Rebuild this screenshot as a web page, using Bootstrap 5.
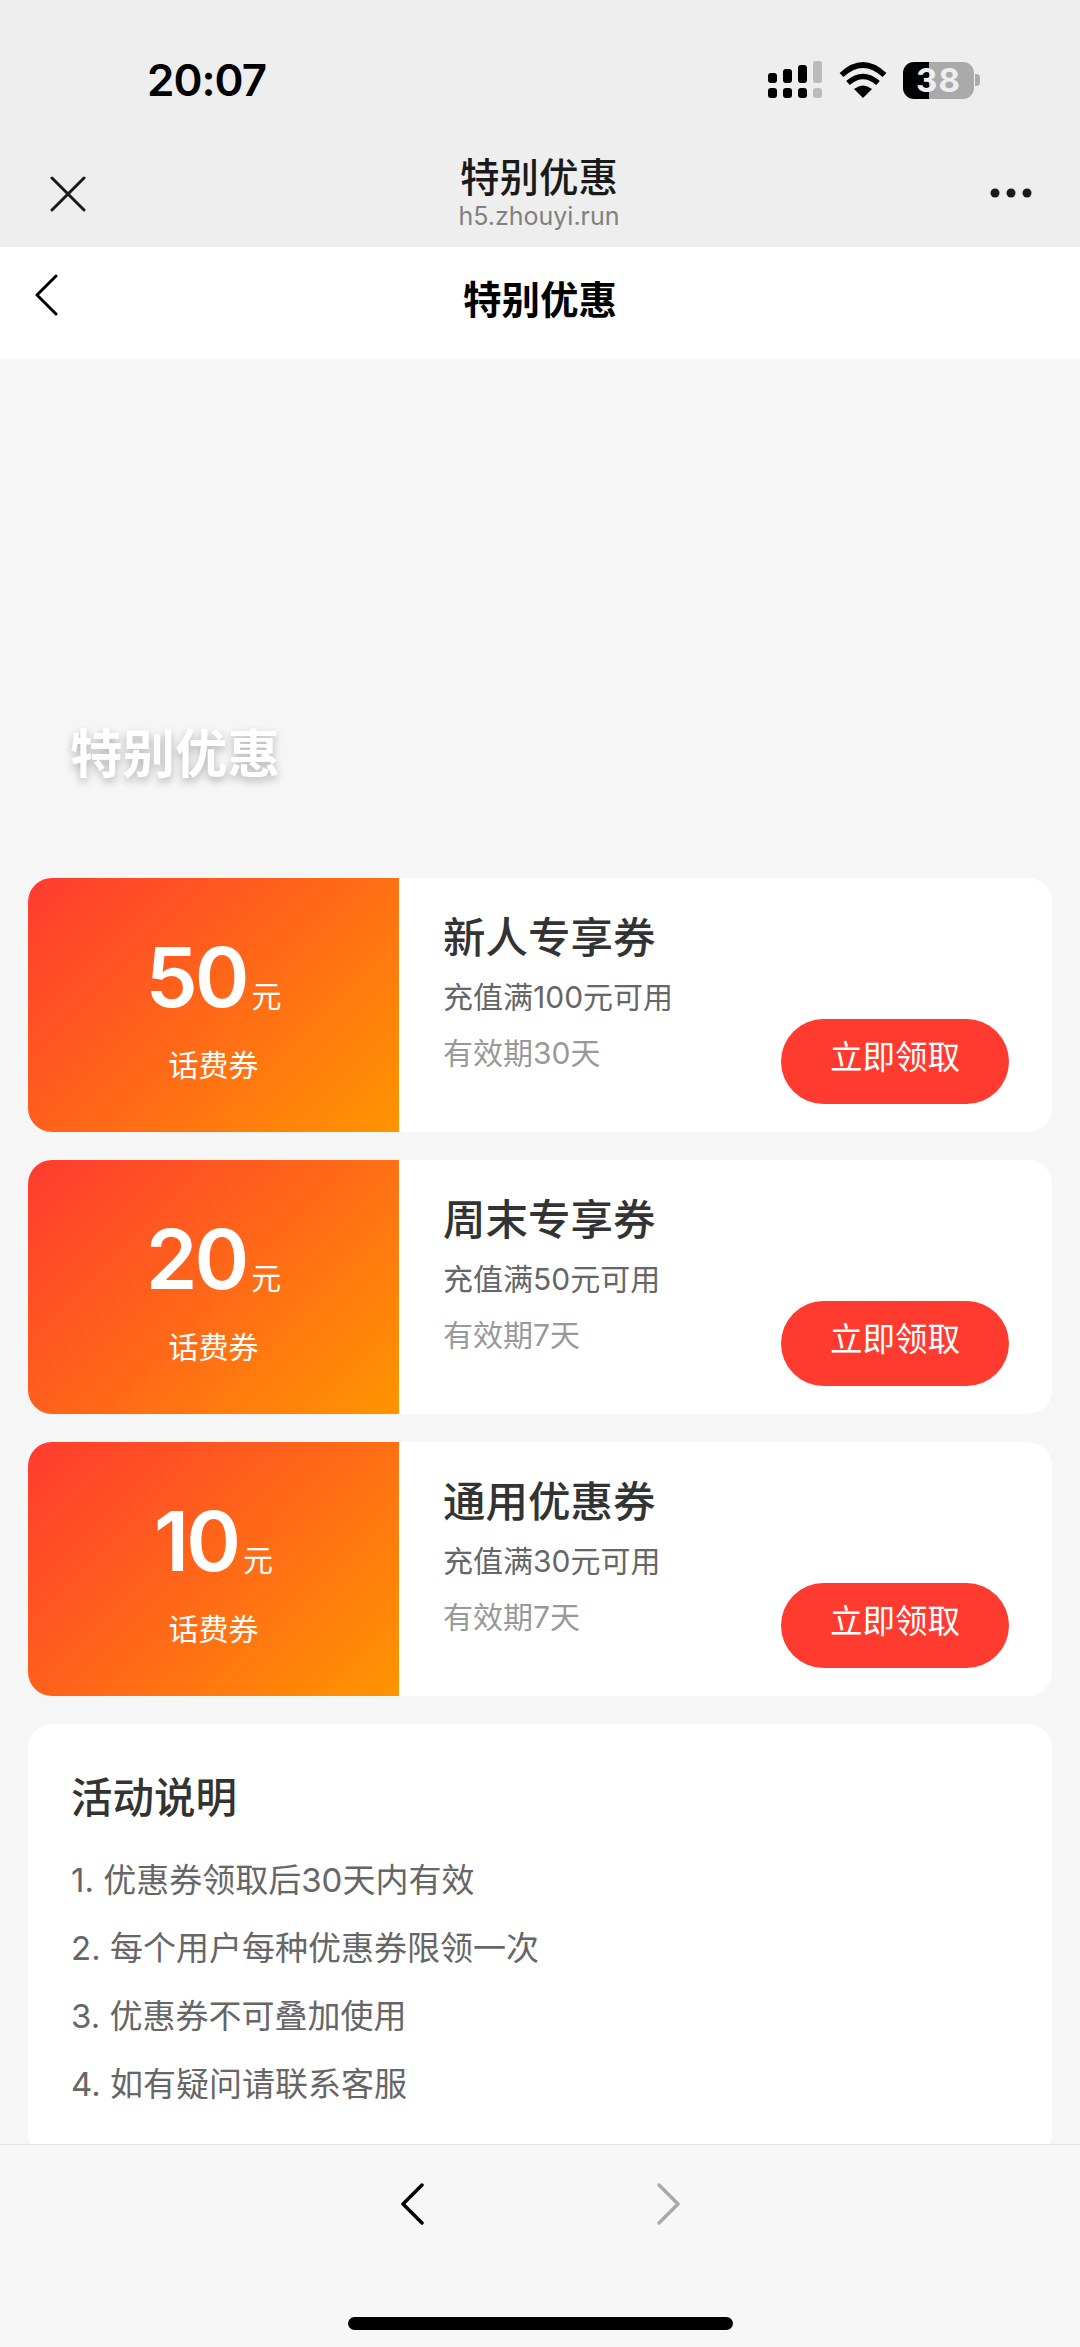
<!DOCTYPE html>
<html lang="zh-CN">
<head>
  <meta charset="UTF-8" />
  <meta name="viewport" content="width=device-width, initial-scale=1.0" />
  <title>特别优惠</title>
  <link rel="stylesheet" href="https://cdn.jsdelivr.net/npm/bootstrap@5.3.0/dist/css/bootstrap.min.css" />
  <style>
    html, body {
      height: 2347px;
      overflow: hidden;
    }
    body {
      font-family: Inter, "Noto Sans CJK SC", sans-serif;
      background: #f6f6f6;
    }
    .app-shell {
      width: 1080px;
      height: 2347px;
    }
    .status-row {
      height: 160px;
      background: #eeeeee;
      padding: 0 100px 0 147px;
    }
    .clock {
      font-size: 44px;
      font-weight: 600;
      color: #000;
      letter-spacing: -1px;
      line-height: 1;
    }
    .battery-cell {
      width: 71px;
      height: 37px;
      border-radius: 11px;
      background: linear-gradient(90deg, #000 37%, #aaa 37%);
      color: #eee;
      font-size: 33px;
      font-weight: 700;
      letter-spacing: 1px;
      line-height: 1;
    }
    .battery-cap {
      width: 5px;
      height: 12px;
      background: #aaa;
      border-radius: 0 4px 4px 0;
      margin-left: 1px;
    }
    .wx-bar {
      height: 87px;
      background: #eeeeee;
      padding: 0 48px 0 50px;
    }
    .wx-side {
      width: 120px;
      height: 66px;
    }
    .wx-side-end {
      width: 124px;
    }
    .wx-heading {
      margin-top: -6px;
    }
    .wx-title {
      font-size: 39.5px;
      font-weight: 500;
      color: #1a1a1a;
      line-height: 48px;
    }
    .wx-domain {
      font-size: 25px;
      color: #808080;
      line-height: 28px;
    }
    .dots-icon {
      margin-top: 28px;
    }
    .page-bar {
      height: 112px;
      background: #fff;
      padding: 0 34px;
    }
    .bar-slot {
      width: 120px;
    }
    .page-title {
      font-size: 38.5px;
      font-weight: 700;
      color: #000;
      line-height: 1;
      margin-top: -6px;
    }
    .scroll-area {
      flex: 1 1 0;
      min-height: 0;
      overflow: hidden;
      padding: 0 28px;
    }
    .hero-area {
      height: 519px;
      padding: 0 0 92px 42px;
    }
    .hero-title {
      font-size: 52.5px;
      font-weight: 600;
      color: #fff;
      line-height: 1.2;
      text-shadow: 0 4px 8px rgba(0, 0, 0, .28);
    }
    .coupon-card {
      height: 254px;
      border: 0;
      border-radius: 24px;
      overflow: hidden;
      margin-bottom: 28px;
      background: #fff;
    }
    .coupon-left {
      width: 371px;
      padding-top: 10px;
      background: linear-gradient(135deg, #ff3b30, #ff9500);
      color: #fff;
    }
    .coupon-amount {
      font-size: 83px;
      font-weight: 600;
      line-height: 84px;
      letter-spacing: -3px;
    }
    .coupon-unit {
      font-size: 30px;
      line-height: 1;
      margin-left: 5px;
      margin-bottom: 8px;
    }
    .coupon-type {
      font-size: 30px;
      line-height: 40px;
      margin-top: 26px;
    }
    .coupon-right {
      padding: 34px 43px 0 44px;
    }
    .coupon-name {
      font-size: 42.5px;
      font-weight: 500;
      color: #333;
      line-height: 52px;
    }
    .coupon-cond {
      font-size: 30px;
      color: #666;
      line-height: 44px;
      margin-top: 11px;
    }
    .coupon-valid {
      font-size: 30px;
      color: #999;
      line-height: 44px;
      margin-top: 12px;
    }
    .claim-btn {
      width: 228px;
      height: 85px;
      margin-top: -56px;
      background: #ff3b30;
      border: 0;
      border-radius: 43px;
      color: #fff;
      font-size: 32.5px;
      line-height: 1;
      padding: 0 0 6px;
    }
    .info-card {
      border: 0;
      border-radius: 24px;
      background: #fff;
      padding: 46px 44px 40px 43px;
    }
    .info-title {
      font-size: 41.5px;
      font-weight: 500;
      color: #333;
      line-height: 56px;
      margin-bottom: 20px;
    }
    .info-line {
      font-size: 33px;
      color: #666;
      line-height: 68px;
    }
    .foot-bar {
      height: 203px;
      background: #f7f7f7;
      border-top: 1px solid #e2e2e2;
    }
    .foot-nav {
      padding-top: 38px;
      gap: 233px;
    }
    .home-pill {
      width: 385px;
      height: 13px;
      background: #000;
      border-radius: 7px;
      margin: 92px auto 0;
    }
  </style>
</head>
<body>
  <div class="app-shell d-flex flex-column">
    <div class="status-row d-flex align-items-center justify-content-between flex-shrink-0">
      <div class="clock">20:07</div>
      <div class="d-flex align-items-center">
        <svg width="55" height="38" viewBox="0 0 55 38" class="me-3">
          <g fill="#000">
            <rect x="0" y="12" width="9" height="10" rx="3"/>
            <rect x="15" y="8" width="9" height="14" rx="3"/>
            <rect x="30" y="4" width="9" height="18" rx="3"/>
            <rect x="0" y="27" width="9" height="10" rx="3"/>
            <rect x="15" y="27" width="9" height="10" rx="3"/>
            <rect x="30" y="27" width="9" height="10" rx="3"/>
          </g>
          <rect x="45" y="0" width="9" height="22" rx="3" fill="#bbb"/>
          <rect x="45" y="27" width="9" height="10" rx="3" fill="#bbb"/>
        </svg>
        <svg width="48" height="36" viewBox="0 0 48 36" class="me-3">
          <path d="M24 36 L15 27 Q24 20 33 27 Z" fill="#000"/>
          <path d="M9 21 Q24 8 39 21" fill="none" stroke="#000" stroke-width="5.5"/>
          <path d="M2.5 13 Q24 -7 45.5 13" fill="none" stroke="#000" stroke-width="5.5"/>
        </svg>
        <div class="battery-cell d-flex align-items-center justify-content-center">38</div>
        <div class="battery-cap"></div>
      </div>
    </div>

    <div class="wx-bar d-flex justify-content-between align-items-start flex-shrink-0">
      <div class="wx-side">
        <svg width="36" height="36" viewBox="0 0 36 36" class="mt-3">
          <path d="M2 2 L34 34 M34 2 L2 34" fill="none" stroke="#1a1a1a" stroke-width="3" stroke-linecap="round"/>
        </svg>
      </div>
      <div class="wx-heading text-center">
        <div class="wx-title">特别优惠</div>
        <div class="wx-domain">h5.zhouyi.run</div>
      </div>
      <div class="wx-side wx-side-end text-end">
        <svg width="42" height="10" viewBox="0 0 42 10" class="dots-icon">
          <circle cx="5" cy="5" r="4.5" fill="#1a1a1a"/>
          <circle cx="21" cy="5" r="4.5" fill="#1a1a1a"/>
          <circle cx="37" cy="5" r="4.5" fill="#1a1a1a"/>
        </svg>
      </div>
    </div>

    <div class="page-bar d-flex align-items-center justify-content-between flex-shrink-0">
      <div class="bar-slot">
        <svg width="24" height="42" viewBox="0 0 24 42" class="d-block mb-3">
          <path d="M22 2 L3 21 L22 40" fill="none" stroke="#000" stroke-width="3" stroke-linecap="round" stroke-linejoin="round"/>
        </svg>
      </div>
      <div class="page-title">特别优惠</div>
      <div class="bar-slot"></div>
    </div>

    <div class="scroll-area">
      <div class="hero-area d-flex align-items-end">
        <div class="hero-title">特别优惠</div>
      </div>

      <div class="card coupon-card flex-row">
        <div class="coupon-left d-flex flex-column align-items-center justify-content-center">
          <div class="d-flex align-items-end">
            <span class="coupon-amount">50</span><span class="coupon-unit">元</span>
          </div>
          <div class="coupon-type">话费券</div>
        </div>
        <div class="coupon-right flex-grow-1 d-flex flex-column">
          <div class="coupon-name">新人专享券</div>
          <div class="coupon-cond">充值满100元可用</div>
          <div class="coupon-valid">有效期30天</div>
          <button class="btn claim-btn align-self-end flex-shrink-0" type="button">立即领取</button>
        </div>
      </div>

      <div class="card coupon-card flex-row">
        <div class="coupon-left d-flex flex-column align-items-center justify-content-center">
          <div class="d-flex align-items-end">
            <span class="coupon-amount">20</span><span class="coupon-unit">元</span>
          </div>
          <div class="coupon-type">话费券</div>
        </div>
        <div class="coupon-right flex-grow-1 d-flex flex-column">
          <div class="coupon-name">周末专享券</div>
          <div class="coupon-cond">充值满50元可用</div>
          <div class="coupon-valid">有效期7天</div>
          <button class="btn claim-btn align-self-end flex-shrink-0" type="button">立即领取</button>
        </div>
      </div>

      <div class="card coupon-card flex-row">
        <div class="coupon-left d-flex flex-column align-items-center justify-content-center">
          <div class="d-flex align-items-end">
            <span class="coupon-amount">10</span><span class="coupon-unit">元</span>
          </div>
          <div class="coupon-type">话费券</div>
        </div>
        <div class="coupon-right flex-grow-1 d-flex flex-column">
          <div class="coupon-name">通用优惠券</div>
          <div class="coupon-cond">充值满30元可用</div>
          <div class="coupon-valid">有效期7天</div>
          <button class="btn claim-btn align-self-end flex-shrink-0" type="button">立即领取</button>
        </div>
      </div>

      <div class="card info-card">
        <div class="info-title">活动说明</div>
        <div class="info-line">1. 优惠券领取后30天内有效</div>
        <div class="info-line">2. 每个用户每种优惠券限领一次</div>
        <div class="info-line">3. 优惠券不可叠加使用</div>
        <div class="info-line">4. 如有疑问请联系客服</div>
      </div>
    </div>

    <div class="foot-bar flex-shrink-0">
      <div class="foot-nav d-flex justify-content-center">
        <svg width="24" height="42" viewBox="0 0 24 42">
          <path d="M22 2 L3 21 L22 40" fill="none" stroke="#000" stroke-width="3.5" stroke-linecap="round" stroke-linejoin="round"/>
        </svg>
        <svg width="24" height="42" viewBox="0 0 24 42">
          <path d="M2 2 L21 21 L2 40" fill="none" stroke="#aaa" stroke-width="3.5" stroke-linecap="round" stroke-linejoin="round"/>
        </svg>
      </div>
      <div class="home-pill"></div>
    </div>
  </div>
  <script src="https://cdn.jsdelivr.net/npm/bootstrap@5.3.0/dist/js/bootstrap.bundle.min.js"></script>
</body>
</html>
